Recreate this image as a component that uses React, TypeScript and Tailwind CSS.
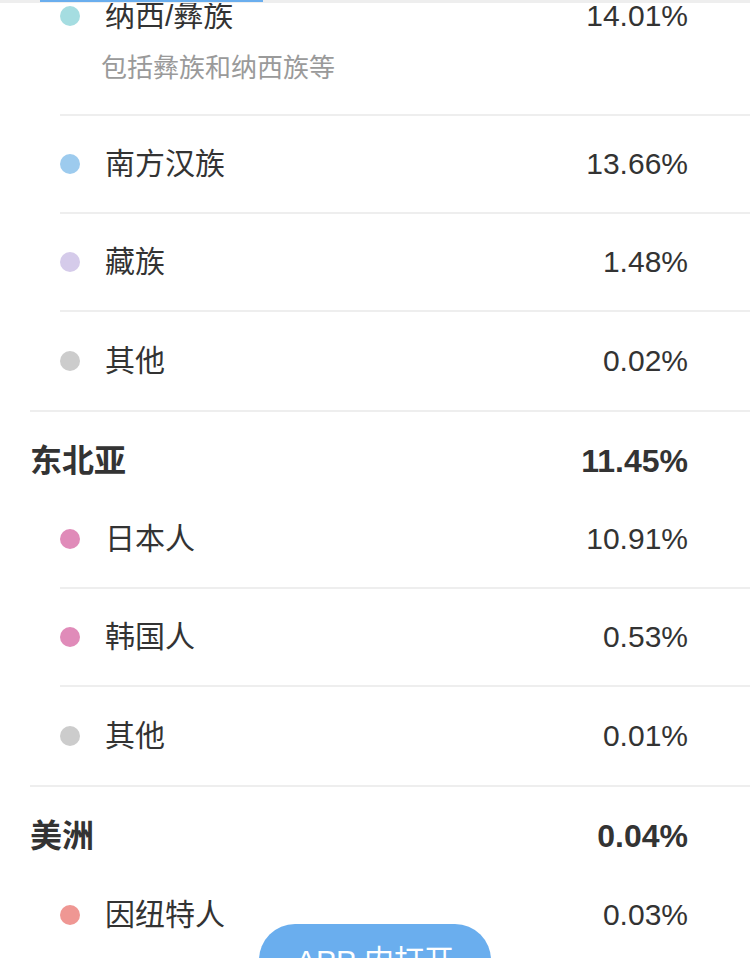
import React from 'react';

type Item = { name: string; pct: string; dot: string; note?: string };
type Group = { title?: string; pct?: string; items: Item[] };

const groups: Group[] = [
  {
    items: [
      { name: '纳西/彝族', pct: '14.01%', dot: 'bg-[#a5dde1]', note: '包括彝族和纳西族等' },
      { name: '南方汉族', pct: '13.66%', dot: 'bg-[#9dcbee]' },
      { name: '藏族', pct: '1.48%', dot: 'bg-[#d5cbea]' },
      { name: '其他', pct: '0.02%', dot: 'bg-[#cccccc]' },
    ],
  },
  {
    title: '东北亚',
    pct: '11.45%',
    items: [
      { name: '日本人', pct: '10.91%', dot: 'bg-[#e08bb9]' },
      { name: '韩国人', pct: '0.53%', dot: 'bg-[#e08bb9]' },
      { name: '其他', pct: '0.01%', dot: 'bg-[#cccccc]' },
    ],
  },
  {
    title: '美洲',
    pct: '0.04%',
    items: [{ name: '因纽特人', pct: '0.03%', dot: 'bg-[#ef9793]' }],
  },
];

function Row({ item, last }: { item: Item; last: boolean }) {
  const border = last ? '' : 'border-b-2 border-[#eeeeee]';
  if (item.note) {
    return (
      <div className={`ml-[30px] pt-[34px] pb-[31px] pr-[62px] ${border}`}>
        <div className="flex items-center h-[30px]">
          <span className={`w-5 h-5 rounded-full ${item.dot}`} />
          <span className="ml-[25px] flex-1 text-[30px] leading-[30px]">{item.name}</span>
          <span className="text-[30px] leading-[30px]">{item.pct}</span>
        </div>
        <div className="mt-[22px] ml-[41px] text-[26px] leading-[30px] text-[#9a9a9a]">{item.note}</div>
      </div>
    );
  }
  return (
    <div className={`ml-[30px] h-[98px] flex items-center pr-[62px] ${border}`}>
      <span className={`w-5 h-5 rounded-full ${item.dot}`} />
      <span className="ml-[25px] flex-1 text-[30px] leading-[30px]">{item.name}</span>
      <span className="text-[30px] leading-[30px]">{item.pct}</span>
    </div>
  );
}

export default function App() {
  return (
    <div
      className="relative w-[750px] h-[958px] overflow-hidden bg-white text-[#333333]"
      style={{ fontFamily: '"Liberation Sans", "Noto Sans CJK SC", sans-serif' }}
    >
      <div className="-mt-[33px]">
        {groups.map((g, gi) => (
          <div key={gi} className="ml-[30px] border-b-2 border-[#eeeeee]">
            {g.title && (
              <div className="flex items-center pt-[33px] pb-[14px] pr-[62px] h-[79px]">
                <span className="flex-1 text-[32px] leading-[32px] font-bold">{g.title}</span>
                <span className="text-[32px] leading-[32px] font-bold">{g.pct}</span>
              </div>
            )}
            {g.items.map((it, i) => (
              <Row key={i} item={it} last={i === g.items.length - 1} />
            ))}
          </div>
        ))}
      </div>

      {/* bottom of the sticky tab bar */}
      <div className="absolute top-0 left-0 w-full h-[3px] bg-[#eeeeee]">
        <div className="absolute top-0 left-[40px] w-[223px] h-[2px] bg-[#6aaeee]" />
      </div>

      <div className="absolute top-[924px] left-1/2 -translate-x-1/2 w-[232px] h-[72px] rounded-full bg-[#6aaeee] text-white text-[30px] flex items-center justify-center">
        APP 内打开
      </div>
    </div>
  );
}
